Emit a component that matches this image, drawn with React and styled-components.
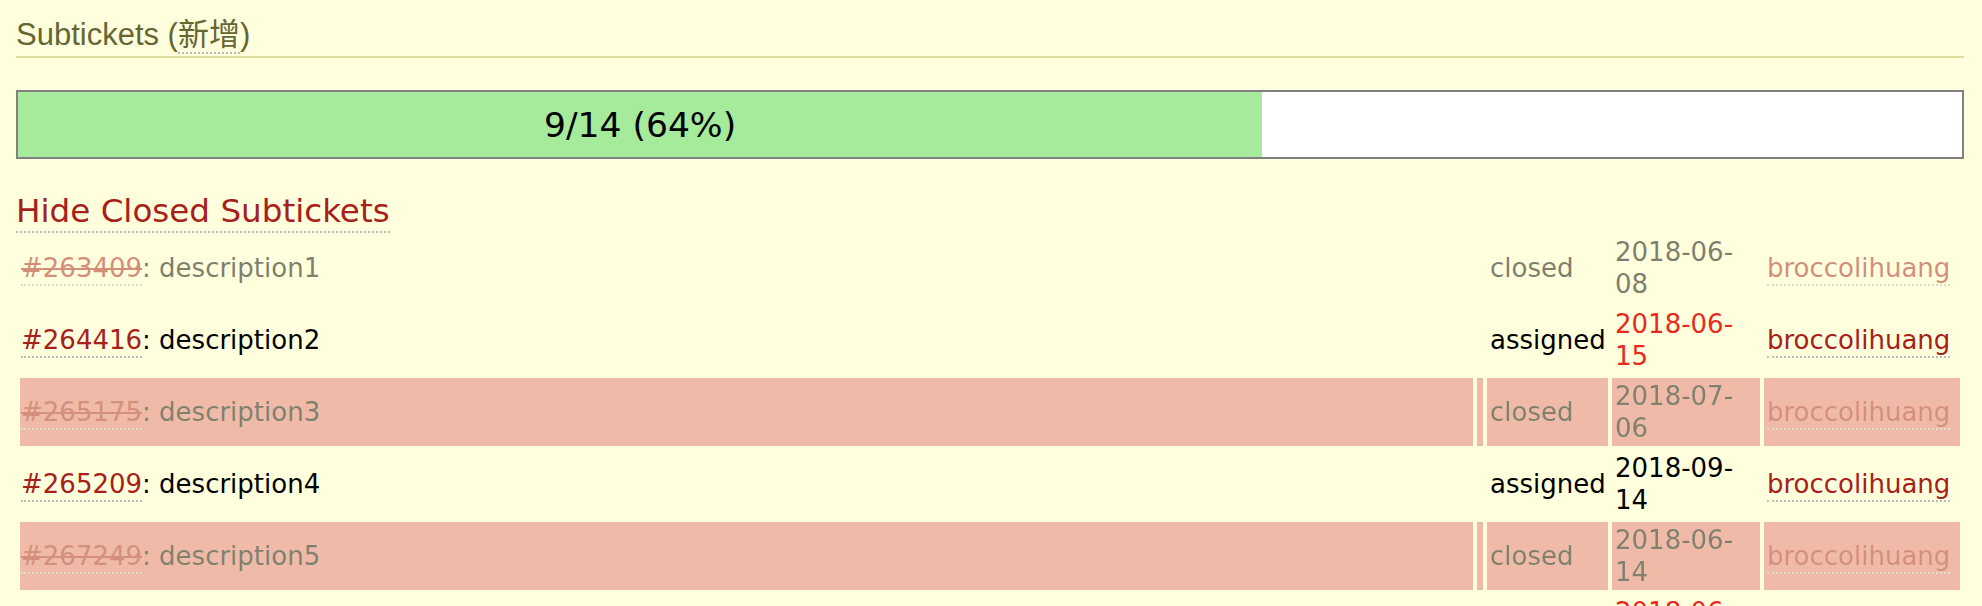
import React from "react";
import styled, { createGlobalStyle } from "styled-components";

const GlobalStyle = createGlobalStyle`
  html, body {
    margin: 0;
    padding: 0;
    background: #ffffdd;
    overflow: hidden;
  }
  body {
    font-family: "DejaVu Sans", Verdana, sans-serif;
    color: #000;
  }
`;

const tickets = [
  { id: 263409, summary: "description1", status: "closed", due: "2018-06-08", owner: "broccolihuang" },
  { id: 264416, summary: "description2", status: "assigned", due: "2018-06-15", owner: "broccolihuang", overdue: true },
  { id: 265175, summary: "description3", status: "closed", due: "2018-07-06", owner: "broccolihuang", shade: true },
  { id: 265209, summary: "description4", status: "assigned", due: "2018-09-14", owner: "broccolihuang" },
  { id: 267249, summary: "description5", status: "closed", due: "2018-06-14", owner: "broccolihuang", shade: true },
  { id: 268075, summary: "description6", status: "assigned", due: "2018-06-29", owner: "broccolihuang", overdue: true },
];

const Page = styled.div`
  padding: 0 18px 0 16px;
  min-height: 100vh;
  background: #ffffdd;
`;

const Heading = styled.h3`
  margin: 0;
  padding: 17px 0 3px;
  font-family: "Liberation Sans", "Noto Sans CJK SC", Arial, sans-serif;
  font-size: 31px;
  font-weight: normal;
  line-height: 36px;
  color: #666633;
  border-bottom: 2px solid #dddd99;
`;

const Abbr = styled.span`
  border-bottom: 2px dotted #bbb;
`;

const Progress = styled.div`
  margin-top: 32px;
  display: flex;
  height: 65px;
  border: 2px solid #808080;
  background: #fff;
`;

const Fill = styled.div`
  display: flex;
  align-items: center;
  justify-content: center;
  background: #a6eb9c;
  font-size: 34.5px;
  white-space: nowrap;
`;

const Toggle = styled.div`
  margin-top: 34px;
  font-size: 32.6px;
  line-height: 37px;
`;

const Link = styled.a`
  color: #a8201a;
  text-decoration: ${(p) => (p.$closed ? "line-through" : "none")};
  border-bottom: 2px dotted #bbb;
  padding-bottom: 1px;
  cursor: pointer;
`;

const Table = styled.table`
  width: 100%;
  table-layout: fixed;
  border-collapse: separate;
  border-spacing: 4px;
  font-size: 26px;
  line-height: 32px;
`;

const Col = styled.col`
  width: ${(p) => (p.$w ? `${p.$w}px` : "auto")};
`;

const Row = styled.tr`
  opacity: ${(p) => (p.$closed ? 0.5 : 1)};
`;

const Cell = styled.td`
  padding: 2px 1px 2px 3px;
  vertical-align: middle;
  white-space: ${(p) => (p.$nowrap ? "nowrap" : "normal")};
  background: ${(p) => (p.$shade ? "#df7773" : "transparent")};
  overflow: hidden;

  &:first-child {
    padding-left: 1px;
  }
`;

const Due = styled.span`
  color: ${(p) => (p.$overdue ? "#e82a1e" : "inherit")};
`;

function DueDate({ value, overdue }) {
  const [y, m, d] = value.split("-");
  return (
    <Due $overdue={overdue}>
      {y}-{m}-<wbr />
      {d}
    </Due>
  );
}

export default function App() {
  const done = tickets.filter((t) => t.status === "closed").length + 6;
  const total = tickets.length + 8;
  const pct = Math.round((done / total) * 100);

  return (
    <Page>
      <GlobalStyle />
      <Heading>
        Subtickets (<Abbr>新增</Abbr>)
      </Heading>

      <Progress>
        <Fill style={{ width: `${pct}%` }}>
          {done}/{total} ({pct}%)
        </Fill>
      </Progress>

      <Toggle>
        <Link>Hide Closed Subtickets</Link>
      </Toggle>

      <Table>
        <colgroup>
          <Col />
          <Col $w={6} />
          <Col $w={121} />
          <Col $w={148} />
          <Col $w={196} />
        </colgroup>
        <tbody>
          {tickets.map((t) => {
            const closed = t.status === "closed";
            return (
              <Row key={t.id} $closed={closed}>
                <Cell $shade={t.shade}>
                  <Link $closed={closed}>#{t.id}</Link>: {t.summary}
                </Cell>
                <Cell $shade={t.shade} />
                <Cell $shade={t.shade} $nowrap>
                  {t.status}
                </Cell>
                <Cell $shade={t.shade}>
                  <DueDate value={t.due} overdue={t.overdue} />
                </Cell>
                <Cell $shade={t.shade} $nowrap>
                  <Link>{t.owner}</Link>
                </Cell>
              </Row>
            );
          })}
        </tbody>
      </Table>
    </Page>
  );
}
